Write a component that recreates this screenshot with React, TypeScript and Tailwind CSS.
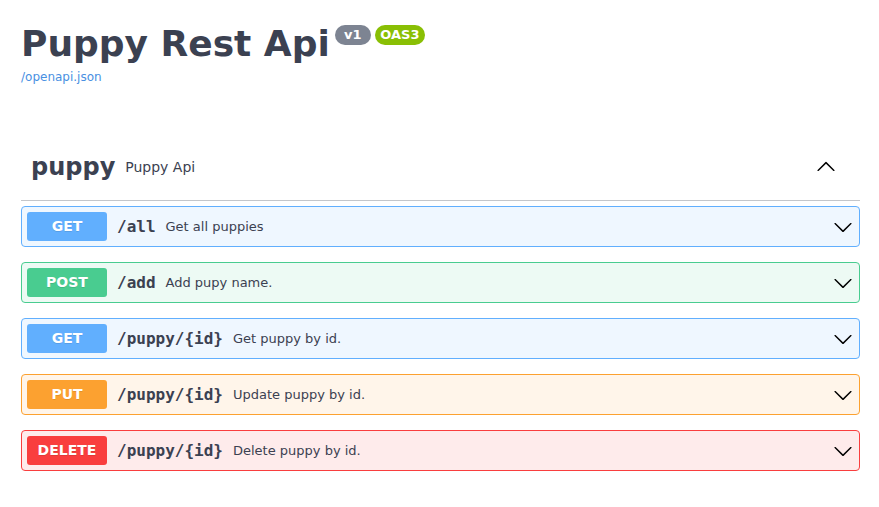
import React from "react";

type Op = {
  method: string;
  path: string;
  summary: string;
  badge: string;
  border: string;
  bg: string;
};

const ops: Op[] = [
  { method: "GET", path: "/all", summary: "Get all puppies", badge: "bg-[#61affe]", border: "border-[#61affe]", bg: "bg-[#eff7ff]" },
  { method: "POST", path: "/add", summary: "Add pupy name.", badge: "bg-[#49cc90]", border: "border-[#49cc90]", bg: "bg-[#edfaf4]" },
  { method: "GET", path: "/puppy/{id}", summary: "Get puppy by id.", badge: "bg-[#61affe]", border: "border-[#61affe]", bg: "bg-[#eff7ff]" },
  { method: "PUT", path: "/puppy/{id}", summary: "Update puppy by id.", badge: "bg-[#fca130]", border: "border-[#fca130]", bg: "bg-[#fff5ea]" },
  { method: "DELETE", path: "/puppy/{id}", summary: "Delete puppy by id.", badge: "bg-[#f93e3e]", border: "border-[#f93e3e]", bg: "bg-[#feebeb]" },
];

function ArrowDown() {
  return (
    <svg width="20" height="20" viewBox="0 0 20 20" className="fill-[#000]">
      <path d="M17.418 6.109c.272-.268.709-.268.979 0s.271.701 0 .969l-7.908 7.83c-.27.268-.707.268-.979 0l-7.908-7.83c-.27-.268-.27-.701 0-.969.271-.268.709-.268.979 0L10 13.25l7.418-7.141z" />
    </svg>
  );
}

function ArrowUp() {
  return (
    <svg width="20" height="20" viewBox="0 0 20 20" className="fill-[#000]">
      <path d="M17.418 14.908c.272.268.709.268.979 0s.271-.701 0-.969l-7.908-7.83a.697.697 0 0 0-.979 0l-7.908 7.83c-.27.268-.27.701 0 .969.271.268.709.268.979 0L10 7.779l7.418 7.129z" />
    </svg>
  );
}

function OpBlock({ op }: { op: Op }) {
  return (
    <div className={`flex items-center h-[41px] mb-[15px] p-[5px] border rounded-[4px] ${op.border} ${op.bg}`}>
      {/* method badge */}
      <span
        className={`flex items-center justify-center w-[80px] h-[29px] rounded-[3px] text-[14px] font-bold text-white [text-shadow:0_1px_0_rgba(0,0,0,0.1)] ${op.badge}`}
      >
        {op.method}
      </span>
      <span className="px-[10px] font-['DejaVu_Sans_Mono',monospace] text-[16px] font-bold text-[#3b4151]">
        {op.path}
      </span>
      <span className="text-[13px] text-[#3b4151]">{op.summary}</span>
      <span className="ml-auto mr-[1px] flex items-center">
        <ArrowDown />
      </span>
    </div>
  );
}

export default function App() {
  return (
    <div className="min-h-screen bg-white pl-[21px] pr-[19px] pt-[23px] font-['DejaVu_Sans',sans-serif] text-[#3b4151]">
      {/* Info */}
      <div className="flex items-start">
        <h2 className="text-[36px] leading-[42px] font-bold">Puppy Rest Api</h2>
        <span className="ml-[5px] mt-[2px] flex items-center justify-center w-[36px] h-[20px] rounded-full bg-[#7d8492] text-[13px] font-bold text-white">
          v1
        </span>
        <span className="ml-[4px] mt-[2px] flex items-center justify-center w-[50px] h-[20px] rounded-full bg-[#89bf04] text-[13px] font-bold text-white">
          OAS3
        </span>
      </div>
      <a className="block mt-[5px] text-[12px] leading-[14px] text-[#4990e2]">/openapi.json</a>

      {/* Tag */}
      <h3 className="mt-[61px] mb-[5px] flex items-center h-[56px] pb-[11px] pl-[10px] pr-[20px] border-b border-[#3b4151]/30">
        <span className="text-[24px] font-bold">puppy</span>
        <small className="px-[10px] text-[14px]">Puppy Api</small>
        <span className="ml-auto mr-[4px] mb-[3px] flex items-center">
          <ArrowUp />
        </span>
      </h3>

      {ops.map((op, i) => (
        <OpBlock key={i} op={op} />
      ))}
    </div>
  );
}
